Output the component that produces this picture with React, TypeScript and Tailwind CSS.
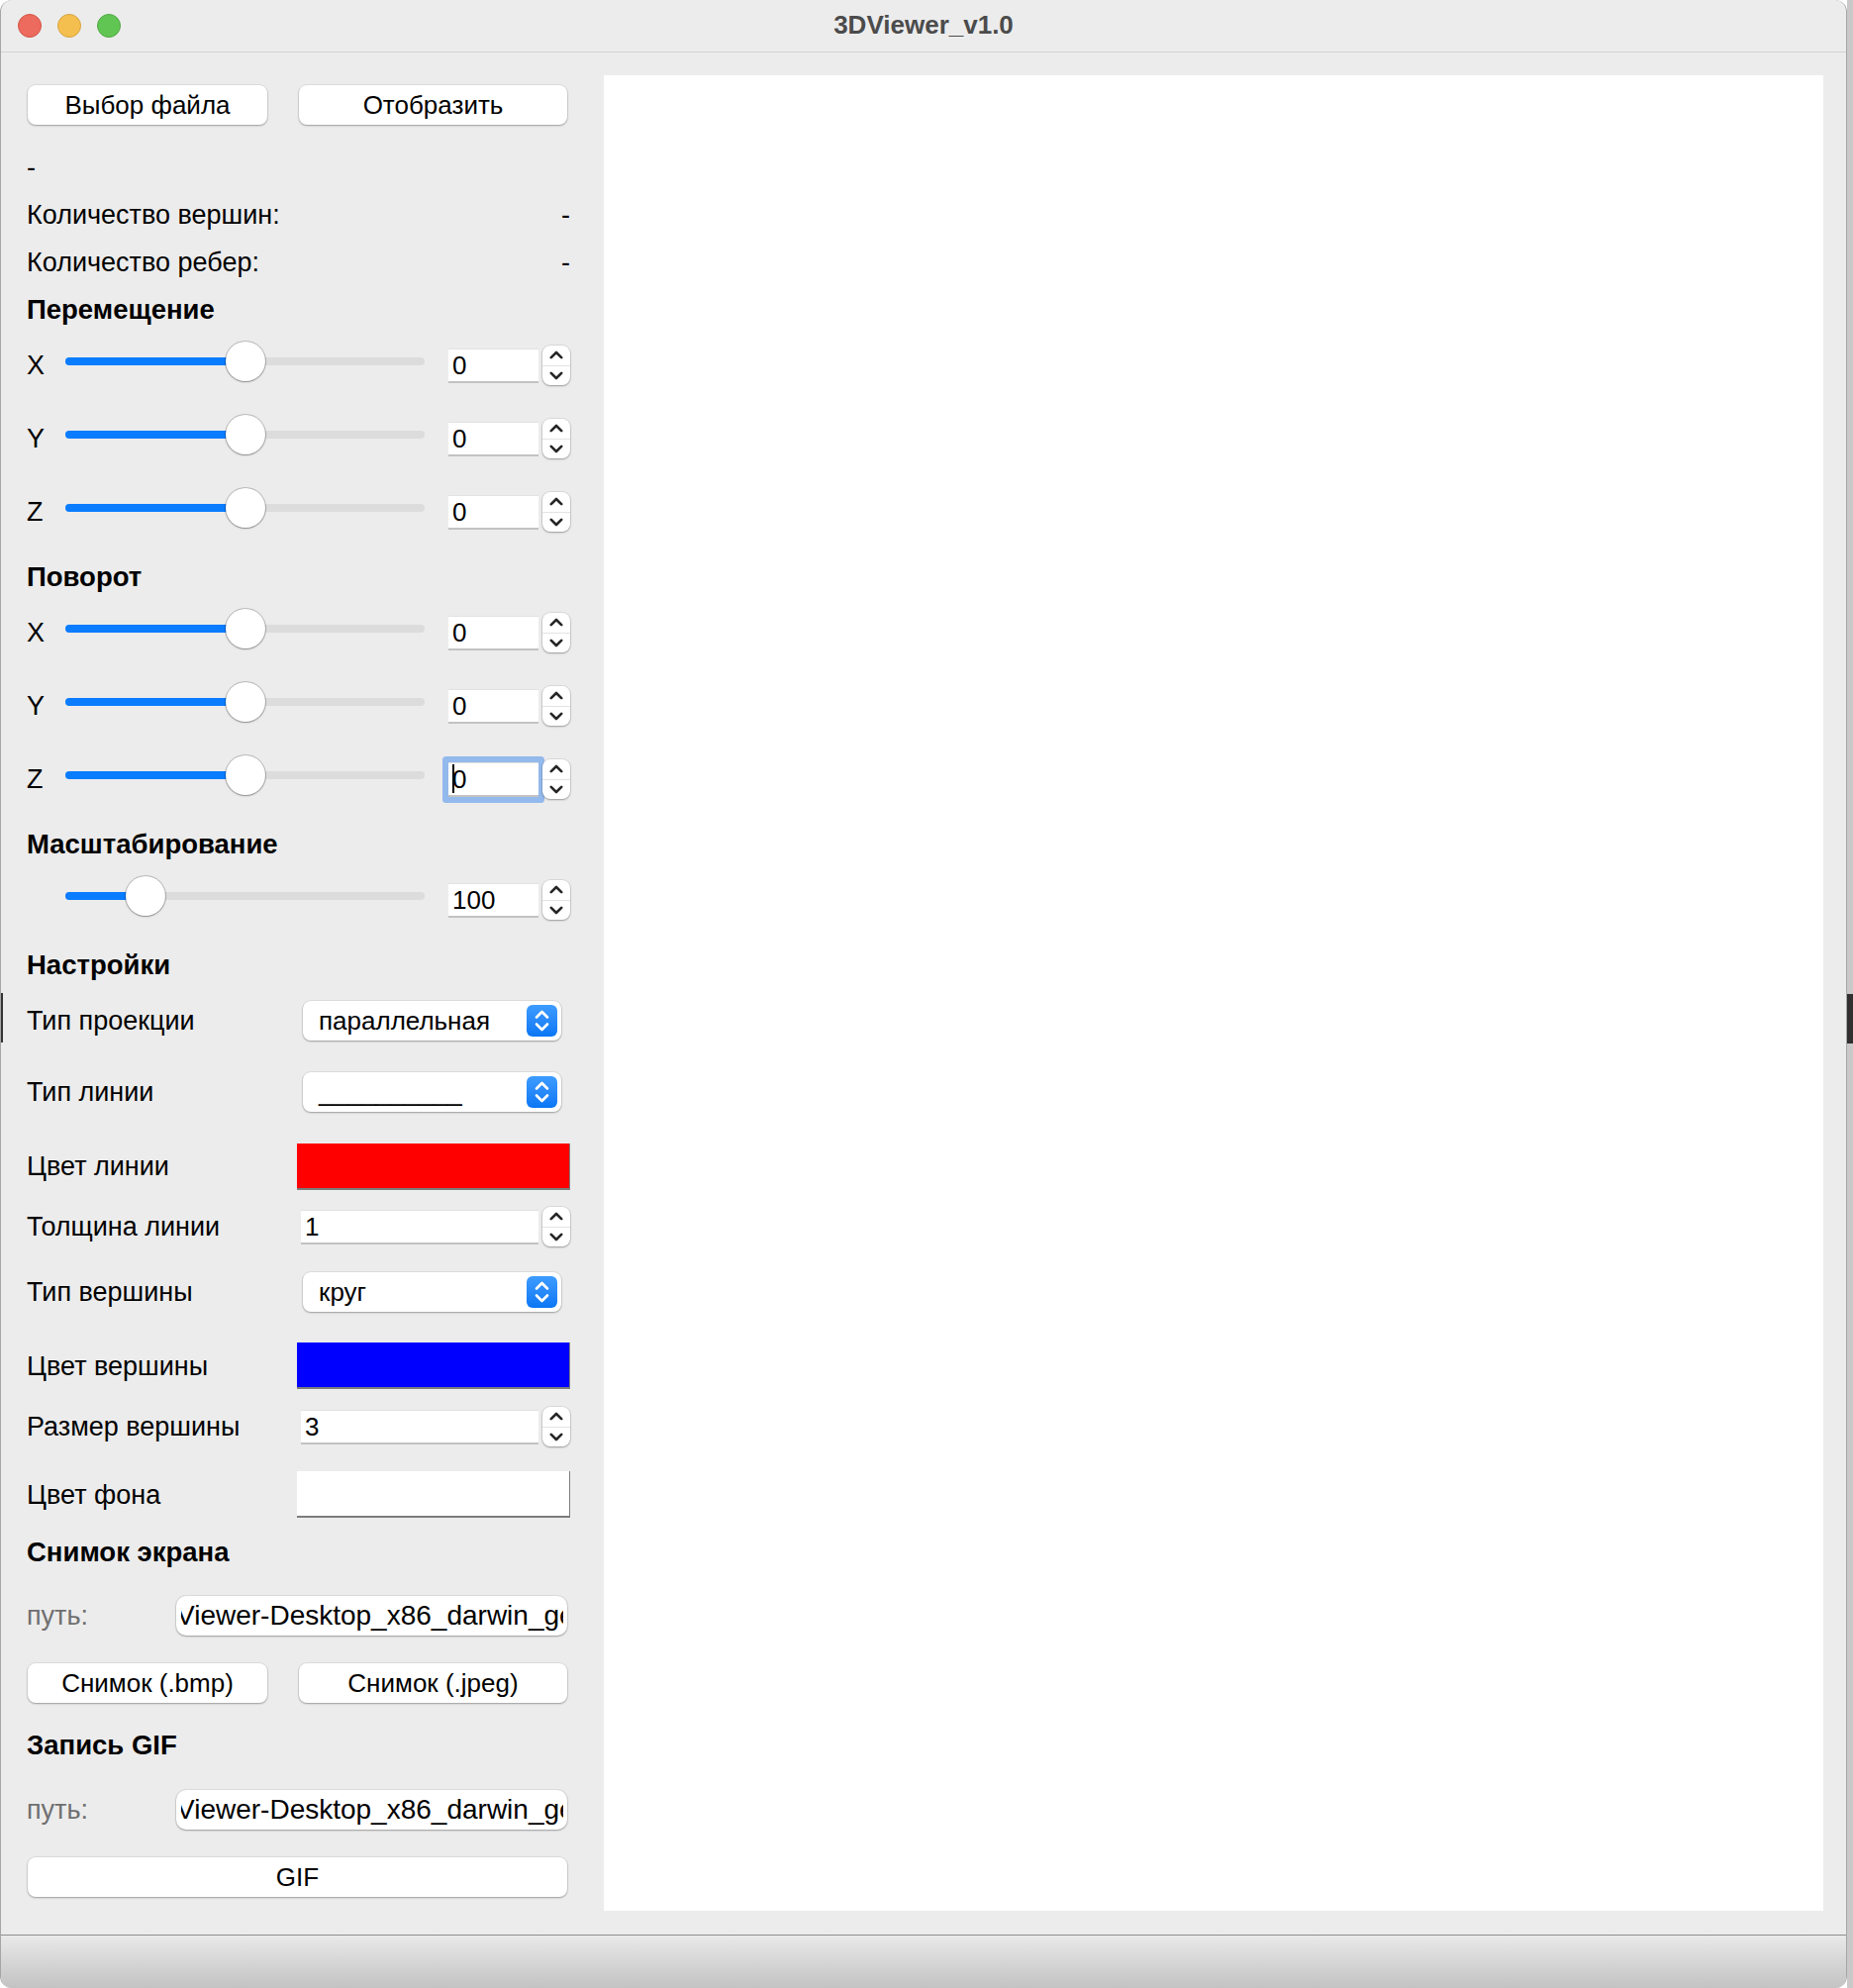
import React from 'react';

function Stepper() {
  return (
    <div className="relative z-10 w-[28px] h-[40px] rounded-[8px] bg-white shadow-[0_0_0_1px_rgba(0,0,0,0.07),0_1px_2px_rgba(0,0,0,0.3)] flex flex-col">
      <div className="flex-1 flex items-center justify-center border-b border-[#e3e3e3]">
        <svg width="14" height="9" viewBox="0 0 14 9">
          <path d="M1.8 7.2 L7 2 L12.2 7.2" fill="none" stroke="#262626" strokeWidth="2.6" strokeLinecap="round" strokeLinejoin="round" />
        </svg>
      </div>
      <div className="flex-1 flex items-center justify-center">
        <svg width="14" height="9" viewBox="0 0 14 9">
          <path d="M1.8 1.8 L7 7 L12.2 1.8" fill="none" stroke="#262626" strokeWidth="2.6" strokeLinecap="round" strokeLinejoin="round" />
        </svg>
      </div>
    </div>
  );
}

function NumField({ value, wide, focused }: { value: string; wide?: boolean; focused?: boolean }) {
  return (
    <div
      className={
        (wide ? 'w-[240px] ml-[4px] ' : 'w-[91px] ') +
        'h-[35px] bg-white text-[26px] border-t border-[#e2e2e2] border-b-2 border-b-[#c2c2c2] flex items-center pl-[4px] ' +
        (focused ? 'ring-[6px] ring-[#94b9ec] rounded-[1px]' : '')
      }
    >
      {focused && <span className="inline-block w-[2px] h-[29px] bg-black -mr-[2px]" />}
      <span className="leading-none">{value}</span>
    </div>
  );
}

function Slider({ pos }: { pos: number }) {
  return (
    <div className="relative w-[363px] h-[8px] mb-[8px] rounded-full bg-[#dcdcdc]">
      <div className="h-[8px] rounded-full bg-[#0a7cff]" style={{ width: pos }} />
      <div
        className="absolute top-[-16px] w-[40px] h-[40px] rounded-full bg-white shadow-[0_0_0_1px_rgba(0,0,0,0.2),0_1px_2px_rgba(0,0,0,0.25)]"
        style={{ left: pos - 20 }}
      />
    </div>
  );
}

function SliderRow({ label, pos, value, focused, mt }: { label: string; pos: number; value: string; focused?: boolean; mt: string }) {
  return (
    <div className={`${mt} h-[44px] flex items-center`}>
      <div className="w-[39px]">{label}</div>
      <Slider pos={pos} />
      <div className="w-[24px]" />
      <NumField value={value} focused={focused} />
      <div className="w-[4px]" />
      <Stepper />
    </div>
  );
}

function Combo({ text }: { text: string }) {
  return (
    <div className="ml-[6px] w-[261px] h-[40px] rounded-[8px] bg-white text-[26px] shadow-[0_0_0_1px_rgba(0,0,0,0.06),0_1px_2px_rgba(0,0,0,0.3)] flex items-center pl-[16px] pr-[4px]">
      <span className="flex-1 whitespace-nowrap">{text}</span>
      <div className="w-[31px] h-[32px] rounded-[6px] bg-linear-to-b from-[#3d9cff] to-[#0876f4]">
        <svg width="31" height="32" viewBox="0 0 31 32">
          <path d="M10 12.5 L15.5 7 L21 12.5" fill="none" stroke="white" strokeWidth="2.6" strokeLinecap="round" strokeLinejoin="round" />
          <path d="M10 19.5 L15.5 25 L21 19.5" fill="none" stroke="white" strokeWidth="2.6" strokeLinecap="round" strokeLinejoin="round" />
        </svg>
      </div>
    </div>
  );
}

function SettingRow({ label, mt, h, children }: { label: string; mt: string; h: string; children: React.ReactNode }) {
  return (
    <div className={`${mt} ${h} flex items-center`}>
      <div className="w-[273px] whitespace-nowrap">{label}</div>
      <div className="w-[276px] flex items-center">{children}</div>
    </div>
  );
}

function Swatch({ color }: { color: string }) {
  return <div className={`w-[276px] h-[47px] ${color} border-r border-b-2 border-[#7c7c7c]`} />;
}

function PathRow({ mt }: { mt: string }) {
  return (
    <div className={`${mt} h-[40px] flex items-center`}>
      <div className="w-[151px] text-[#6f6f6f]">путь:</div>
      <div className="w-[395px] h-[40px] rounded-[10px] bg-white shadow-[0_0_0_1px_rgba(0,0,0,0.06),0_1px_2px_rgba(0,0,0,0.3)] flex items-center pl-[5px] pr-[4px]">
        <div className="w-full overflow-hidden whitespace-nowrap text-[28px]">
          <span className="inline-block -ml-[5px]">Viewer-Desktop_x86_darwin_ge</span>
        </div>
      </div>
    </div>
  );
}

const btn =
  'h-[40px] rounded-[8px] bg-white shadow-[0_0_0_1px_rgba(0,0,0,0.06),0_1px_2px_rgba(0,0,0,0.3)] text-[26px] text-black';

const head = 'h-[30px] font-bold text-[27.5px]';

export default function App() {
  return (
    <div className="w-[1872px] h-[2008px] bg-white flex font-['Liberation_Sans',Arial,sans-serif] text-[27px] text-black leading-[30px]">
      <div className="relative w-[1866px] h-[2008px] flex flex-col bg-[#ececec] rounded-[12px] overflow-hidden border-l border-r border-[#a6a6a6]">
        {/* title bar */}
        <div className="relative h-[53px] shrink-0 border-b border-[#d2d2d2] flex items-center pl-[17px] gap-[16px]">
          <div className="w-[24px] h-[24px] rounded-full bg-[#ed6a5e] border border-[#d25446]" />
          <div className="w-[24px] h-[24px] rounded-full bg-[#f5bf4f] border border-[#d7a343]" />
          <div className="w-[24px] h-[24px] rounded-full bg-[#61c554] border border-[#52a944]" />
          <div className="absolute inset-0 flex items-center justify-center pointer-events-none">
            <span className="font-bold text-[26px] text-[#4b4b4b] -mt-[2px]">3DViewer_v1.0</span>
          </div>
        </div>

        {/* body */}
        <div className="flex-1 flex">
          <div className="w-[609px] shrink-0 pt-[33px] pl-[26px] flex flex-col">
            <div className="h-[40px] flex items-center">
              <button className={`${btn} ml-[1px] w-[242px]`}>Выбор файла</button>
              <button className={`${btn} ml-[32px] w-[271px]`}>Отобразить</button>
            </div>
            <div className="mt-[28px] h-[30px]">-</div>
            <div className="mt-[18px] h-[30px] w-[549px] flex justify-between">
              <span>Количество вершин:</span>
              <span>-</span>
            </div>
            <div className="mt-[18px] h-[30px] w-[549px] flex justify-between">
              <span>Количество ребер:</span>
              <span>-</span>
            </div>
            <div className={`mt-[18px] ${head}`}>Перемещение</div>
            <SliderRow mt="mt-[19px]" label="X" pos={182} value="0" />
            <SliderRow mt="mt-[30px]" label="Y" pos={182} value="0" />
            <SliderRow mt="mt-[30px]" label="Z" pos={182} value="0" />
            <div className={`mt-[29px] ${head}`}>Поворот</div>
            <SliderRow mt="mt-[19px]" label="X" pos={182} value="0" />
            <SliderRow mt="mt-[30px]" label="Y" pos={182} value="0" />
            <SliderRow mt="mt-[30px]" label="Z" pos={182} value="0" focused />
            <div className={`mt-[29px] ${head}`}>Масштабирование</div>
            <SliderRow mt="mt-[19px]" label="" pos={81} value="100" />
            <div className={`mt-[29px] ${head}`}>Настройки</div>
            <SettingRow label="Тип проекции" mt="mt-[21px]" h="h-[40px]">
              <Combo text="параллельная" />
            </SettingRow>
            <SettingRow label="Тип линии" mt="mt-[32px]" h="h-[40px]">
              <Combo text="__________" />
            </SettingRow>
            <SettingRow label="Цвет линии" mt="mt-[31px]" h="h-[48px]">
              <Swatch color="bg-[#ff0000]" />
            </SettingRow>
            <SettingRow label="Толщина линии" mt="mt-[16px]" h="h-[42px]">
              <NumField value="1" wide />
              <div className="w-[4px]" />
              <Stepper />
            </SettingRow>
            <SettingRow label="Тип вершины" mt="mt-[25px]" h="h-[40px]">
              <Combo text="круг" />
            </SettingRow>
            <SettingRow label="Цвет вершины" mt="mt-[31px]" h="h-[47px]">
              <Swatch color="bg-[#0000ff]" />
            </SettingRow>
            <SettingRow label="Размер вершины" mt="mt-[18px]" h="h-[40px]">
              <NumField value="3" wide />
              <div className="w-[4px]" />
              <Stepper />
            </SettingRow>
            <SettingRow label="Цвет фона" mt="mt-[25px]" h="h-[47px]">
              <Swatch color="bg-white" />
            </SettingRow>
            <div className={`mt-[20px] ${head}`}>Снимок экрана</div>
            <PathRow mt="mt-[29px]" />
            <div className="mt-[28px] h-[40px] flex items-center">
              <button className={`${btn} ml-[1px] w-[242px]`}>Снимок (.bmp)</button>
              <button className={`${btn} ml-[32px] w-[271px]`}>Снимок (.jpeg)</button>
            </div>
            <div className={`mt-[28px] ${head}`}>Запись GIF</div>
            <PathRow mt="mt-[30px]" />
            <div className="mt-[28px] h-[40px] flex items-center">
              <button className={`${btn} ml-[1px] w-[545px]`}>GIF</button>
            </div>
          </div>

          <div className="pt-[23px] pb-[24px] pr-[23px] flex-1 flex">
            <div className="flex-1 bg-white" />
          </div>
        </div>

        {/* status bar */}
        <div className="h-[54px] shrink-0 border-t border-[#8d8d8d] bg-linear-to-b from-[#e9e9e9] to-[#c3c3c3]" />

        <div className="absolute left-0 top-[1003px] w-[2px] h-[50px] bg-[#333333]" />
      </div>
      <div className="w-[6px] h-[2008px] bg-[#c9c9c9] flex flex-col">
        <div className="mt-[1004px] h-[50px] bg-[#303030]" />
      </div>
    </div>
  );
}
